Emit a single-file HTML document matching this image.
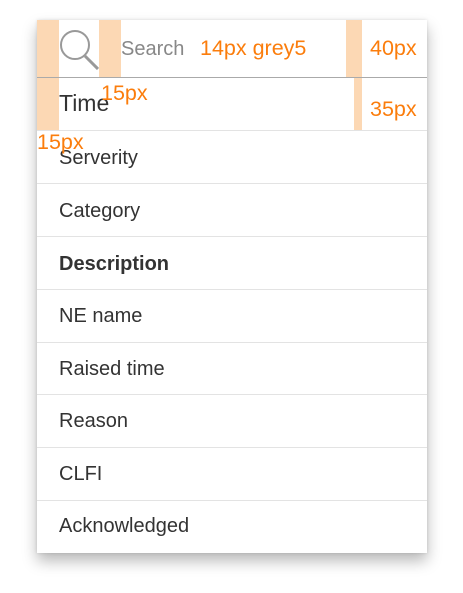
<!DOCTYPE html>
<html><head><meta charset="utf-8"><style>
body{margin:0;width:463px;height:593px;background:#fff;position:relative;overflow:hidden;font-family:"Liberation Sans",sans-serif}
.panel{position:absolute;left:37px;top:20px;width:390px;height:533px;background:#fff;box-shadow:0 8px 14px rgba(0,0,0,.28),0 0 3px rgba(0,0,0,.12)}
.o{position:absolute;background:#fcd8b4}
.row{position:absolute;left:0;width:390px;border-top:1px solid #e3e3e3;font-size:20px;color:#333}
.row span{position:absolute;left:22px}
.l{position:absolute;color:#fb7d0c;font-size:21.5px;white-space:nowrap}
</style></head><body>
<div class="panel">
<div class="o" style="left:0;top:0;width:22px;height:58px"></div>
<div class="o" style="left:62px;top:0;width:22px;height:58px"></div>
<div class="o" style="left:309px;top:0;width:16px;height:58px"></div>
<div class="o" style="left:0;top:58px;width:22px;height:53px"></div>
<div class="o" style="left:317px;top:58px;width:8px;height:53px"></div>
<svg style="position:absolute;left:22px;top:10px" width="40" height="40" viewBox="0 0 40 40"><circle cx="16" cy="15" r="14" fill="none" stroke="#999" stroke-width="2"/><line x1="26" y1="26" x2="39" y2="39" stroke="#999" stroke-width="3"/></svg>
<div style="position:absolute;left:84px;top:18px;font-size:20px;color:#888">Search</div>
<div style="position:absolute;left:0;top:57px;width:390px;height:1px;background:#aaa"></div>
<div class="row" style="top:58px;height:52px;border-top:none"><span style="top:12px;font-size:23px">Time</span></div>
<div class="row" style="top:110px;height:52px"><span style="top:16px">Serverity</span></div>
<div class="row" style="top:163px;height:52px"><span style="top:16px">Category</span></div>
<div class="row" style="top:216px;height:52px"><span style="top:16px;font-weight:bold">Description</span></div>
<div class="row" style="top:269px;height:52px"><span style="top:15px">NE name</span></div>
<div class="row" style="top:322px;height:52px"><span style="top:15px">Raised time</span></div>
<div class="row" style="top:374px;height:52px"><span style="top:15px">Reason</span></div>
<div class="row" style="top:427px;height:52px"><span style="top:15px">CLFI</span></div>
<div class="row" style="top:480px;height:52px"><span style="top:14px">Acknowledged</span></div>
</div>
<div class="l" style="left:200px;top:36px">14px grey5</div>
<div class="l" style="left:370px;top:36px">40px</div>
<div class="l" style="left:101px;top:81px">15px</div>
<div class="l" style="left:370px;top:97px">35px</div>
<div class="l" style="left:37px;top:130px">15px</div>
</body></html>
